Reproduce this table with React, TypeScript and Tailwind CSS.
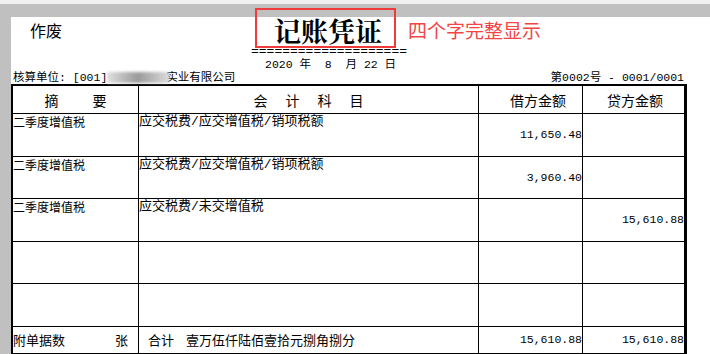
import React from "react";

const mono = "font-['Liberation_Mono','Noto_Sans_CJK_SC',monospace]";
const sans = "font-['Noto_Sans_CJK_SC','Noto_Sans',sans-serif]";

type Row = { summary: string; account: string; debit: string; credit: string };

const rows: Row[] = [
  { summary: "二季度增值税", account: "应交税费/应交增值税/销项税额", debit: "11,650.48", credit: "" },
  { summary: "二季度增值税", account: "应交税费/应交增值税/销项税额", debit: "3,960.40", credit: "" },
  { summary: "二季度增值税", account: "应交税费/未交增值税", debit: "", credit: "15,610.88" },
  { summary: "", account: "", debit: "", credit: "" },
  { summary: "", account: "", debit: "", credit: "" },
];

const heights = ["h-[43px]", "h-[42px]", "h-[43px]", "h-[42px]", "h-[43px]"];

export default function App() {
  return (
    <div className={`w-[710px] h-[354px] overflow-hidden bg-white relative flex flex-col text-black ${sans}`}>
      <div className="h-[4px] bg-[#f0f0f0] shrink-0" />
      <div className="h-[13px] bg-[#c0c0c0] shrink-0" />
      <div className="flex-1 flex min-h-0">
        <div className="w-[11px] bg-[#c0c0c0] shrink-0" />
        <div className="flex-1 flex flex-col min-w-0">
          {/* header */}
          <div className="h-[27px] flex items-start shrink-0">
            <span className="ml-[19px] mt-[5px] text-[16px] leading-[16px]">作废</span>
            <span className="ml-[212px] mt-[1px] text-[27px] leading-[26px] font-bold font-['Noto_Serif_CJK_SC','Noto_Sans_CJK_SC',serif]">
              记账凭证
            </span>
          </div>
          <div className={`mt-[2px] h-[12px] shrink-0 ml-[240px] text-[13px] leading-[12px] ${mono}`}>
            ====================
          </div>
          <div className={`h-[13px] shrink-0 ml-[254px] text-[11.5px] leading-[13px] whitespace-pre ${mono}`}>
            {"2020 年  8  月 22 日"}
          </div>
          <div className={`h-[13px] shrink-0 flex justify-between items-end pl-[2px] pr-[26px] text-[11.5px] leading-[12px] whitespace-pre ${mono}`}>
            <div className="flex items-end">
              <span>{"核算单位: [001]"}</span>
              <span className="relative z-10 inline-block w-[62px] h-[11px] mb-[1px] bg-gradient-to-r from-[#e0e0e0] via-[#9a9a9a] to-[#dcdcdc] blur-[1.5px]" />
              <span className="-ml-[3px]">实业有限公司</span>
            </div>
            <span>第0002号 - 0001/0001</span>
          </div>

          {/* table */}
          <div className="w-[676px] shrink-0 border-l-2 border-t-2 border-r-[3px] border-black flex flex-col">
            <div className="h-[28px] flex border-b border-black text-[14px] leading-[14px]">
              <div className="w-[126px] border-r border-black flex items-center justify-center gap-[34px]">
                <span>摘</span>
                <span>要</span>
              </div>
              <div className="w-[340px] border-r border-black flex items-center justify-center gap-[18px]">
                <span>会</span>
                <span>计</span>
                <span>科</span>
                <span>目</span>
              </div>
              <div className="w-[104px] border-r border-black flex items-center pl-[31px]">借方金额</div>
              <div className="w-[101px] flex items-center pl-[24px]">贷方金额</div>
            </div>

            {rows.map((r, i) => (
              <div key={i} className={`${heights[i]} flex border-b border-black`}>
                <div className="w-[126px] border-r border-black text-[12px] leading-[14px] pt-[1px] overflow-hidden whitespace-nowrap">
                  {r.summary}
                </div>
                <div className={`w-[340px] border-r border-black text-[13px] leading-[14px] pt-[1px] overflow-hidden whitespace-nowrap ${mono}`}>
                  {r.account}
                </div>
                <div className={`w-[104px] border-r border-black flex items-center justify-end text-[11.5px] leading-[12px] ${mono}`}>
                  {r.debit}
                </div>
                <div className={`w-[101px] flex items-center justify-end text-[11.5px] leading-[12px] ${mono}`}>
                  {r.credit}
                </div>
              </div>
            ))}

            <div className="h-[27px] flex border-b border-black">
              <div className="w-[126px] border-r border-black flex items-center justify-between pr-[10px] text-[13px] leading-[14px]">
                <span>附单据数</span>
                <span>张</span>
              </div>
              <div className="w-[340px] border-r border-black flex items-center pl-[9px] text-[13px] leading-[14px]">
                <span>合计</span>
                <span className="ml-[12px]">壹万伍仟陆佰壹拾元捌角捌分</span>
              </div>
              <div className={`w-[104px] border-r border-black flex items-center justify-end text-[11.5px] leading-[12px] ${mono}`}>
                15,610.88
              </div>
              <div className={`w-[101px] flex items-center justify-end text-[11.5px] leading-[12px] ${mono}`}>
                15,610.88
              </div>
            </div>
          </div>
        </div>
      </div>

      {/* annotation overlay */}
      <div className="absolute left-[255px] top-[8px] w-[141px] h-[40px] border-2 border-[#ee3b3b] pointer-events-none" />
      <div className="absolute left-[408px] top-[20px] text-[19px] leading-[20px] text-[#f24545]">四个字完整显示</div>
    </div>
  );
}
